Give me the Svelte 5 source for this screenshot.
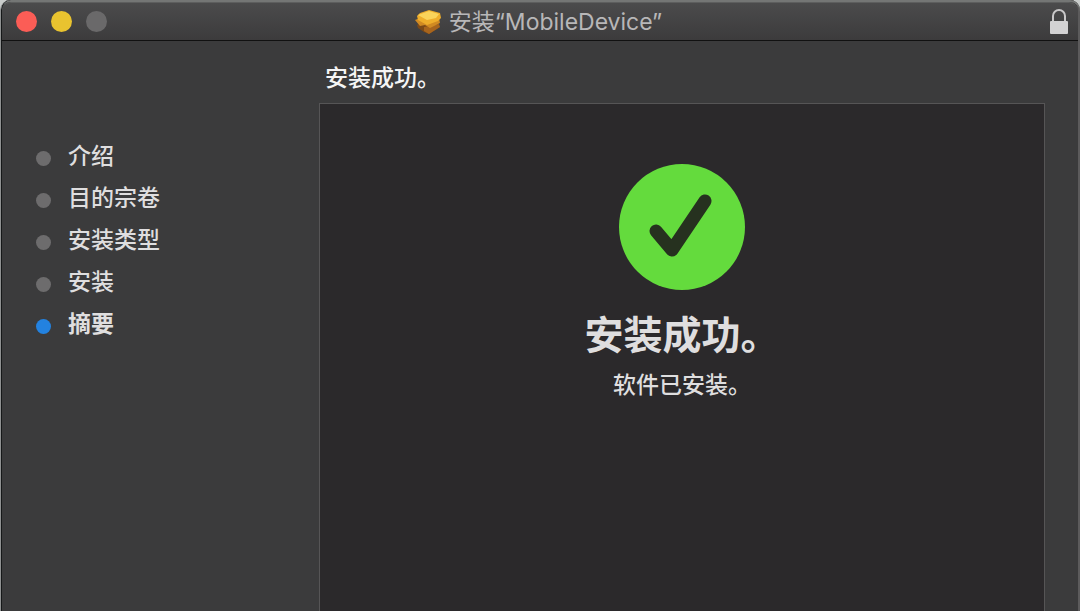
<script lang="ts">
  type Step = { id: string; label: string };

  const product = "MobileDevice";
  const steps: Step[] = [
    { id: "intro", label: "介绍" },
    { id: "volume", label: "目的宗卷" },
    { id: "type", label: "安装类型" },
    { id: "install", label: "安装" },
    { id: "summary", label: "摘要" },
  ];

  let current = $state("summary");
</script>

<div class="window">
  <header class="titlebar">
    <div class="lights">
      <button class="light close" aria-label="关闭"></button>
      <button class="light minimize" aria-label="最小化"></button>
      <button class="light zoom" aria-label="缩放" disabled></button>
    </div>

    <div class="title">
      <svg class="package" viewBox="0 0 28 26" aria-hidden="true">
        <path d="M3 16 L10 12 L24 15 L26 18 L15 25 L10 23 L4 19 Z" fill="#7c4917" />
        <path d="M10 18 L25 15 L26 18 L15 25 L10 22 Z" fill="#a8651d" />
        <path d="M1 11 L6 9 L25 9 L26 14 L16 19 L11 16 L6 17 Z" fill="#d18a22" />
        <path d="M3 7 L6 4 L15 1 L26 4 L27 9 L24 12 L13 16 L4 11 Z" fill="#efae2b" />
        <path d="M4 6 L15 2 L25 5 L22 9 L13 11 Z" fill="#fbd45a" />
      </svg>
      <h1>安装“{product}”</h1>
    </div>

    <button class="lock" aria-label="锁定">
      <svg viewBox="0 0 20 26" aria-hidden="true">
        <path d="M4 13 V7 a6 6 0 0 1 12 0 V13" fill="none" stroke="#c9c8c9" stroke-width="2" />
        <rect x="1" y="12" width="18" height="13" rx="1" fill="#d3d2d3" />
      </svg>
    </button>
  </header>

  <div class="body">
    <nav>
      <ol>
        {#each steps as step (step.id)}
          <li class:current={step.id === current} aria-current={step.id === current ? "step" : undefined}>
            <span class="dot"></span>
            <span>{step.label}</span>
          </li>
        {/each}
      </ol>
    </nav>

    <main>
      <h2>安装成功。</h2>
      <section class="panel">
        <svg class="check" viewBox="0 0 126 126" aria-hidden="true">
          <circle cx="63" cy="63" r="63" fill="#64db3d" />
          <path d="M37 67 L53 86 L86 37" fill="none" stroke="#26311f" stroke-width="13" stroke-linecap="round" stroke-linejoin="round" />
        </svg>
        <p class="result">安装成功。</p>
        <p class="detail">软件已安装。</p>
      </section>
    </main>
  </div>
</div>

<style>
  :global(body) { background: #c9cccb; }

  .window {
    box-sizing: border-box; min-height: 100vh; padding: 2px 2px 0 1px;
    display: flex; flex-direction: column;
    font-family: Inter, "Noto Sans CJK SC", sans-serif; font-size: 23px; line-height: 34px;
    font-weight: 500; color: #dfdedf; background: #3b3b3c;
    border-left: 1px solid #8f9191;
    background-clip: padding-box;
    border-radius: 10px 10px 0 0;
    box-shadow: inset 1px 0 #161819, inset 0 2px #747675, inset -2px 0 #5c5b5c;
  }

  h1, h2, p, ol { margin: 0; padding: 0; }
  button { border: none; padding: 0; background: none; }

  /* Title bar */
  .titlebar {
    box-sizing: border-box; height: 39px; padding: 0 9px 0 14px;
    display: grid; grid-template-columns: 1fr auto 1fr; align-items: center;
    background: linear-gradient(#4b4b4c, #3c3b3c);
    border-top: 1px solid #5d5e5e; border-bottom: 1px solid #111;
    border-radius: 9px 9px 0 0;
  }
  .lights { display: flex; gap: 14px; }
  .light { width: 21px; height: 21px; border-radius: 50%; }
  .close { background: #fb5d56; }
  .minimize { background: #e9c32f; }
  .zoom { background: #6a696a; }

  .title { display: flex; align-items: center; gap: 7px; padding-right: 9px; }
  .title h1 { font-size: 23px; font-weight: 400; color: #b8b7b8; }
  .package { width: 28px; height: 26px; }
  .lock { justify-self: end; width: 20px; height: 26px; }
  .lock svg { display: block; }

  /* Content */
  .body {
    flex: 1; display: grid; grid-template-columns: 283px 1fr;
    padding: 20px 33px 0 34px;
  }

  nav { padding-top: 78px; }
  ol { list-style: none; display: flex; flex-direction: column; gap: 8px; }
  li { display: flex; align-items: center; gap: 17px; }
  li.current { font-weight: 700; }
  .dot { width: 15px; height: 15px; margin-top: 5px; border-radius: 50%; background: #6d6c6d; }
  .current .dot { background: #2382e0; }

  main { display: flex; flex-direction: column; gap: 8px; }
  h2 { padding-left: 6px; font-size: 23px; font-weight: 500; color: #f5f5f5; }

  .panel {
    flex: 1; display: flex; flex-direction: column; align-items: center;
    padding-top: 60px;
    background: #2b292b; border: 1px solid #565556; border-bottom: none;
  }
  .check { width: 126px; height: 126px; }
  .result { margin-top: 16px; font-size: 39px; line-height: 58px; font-weight: 700; }
  .detail { margin-top: 4px; }
</style>
